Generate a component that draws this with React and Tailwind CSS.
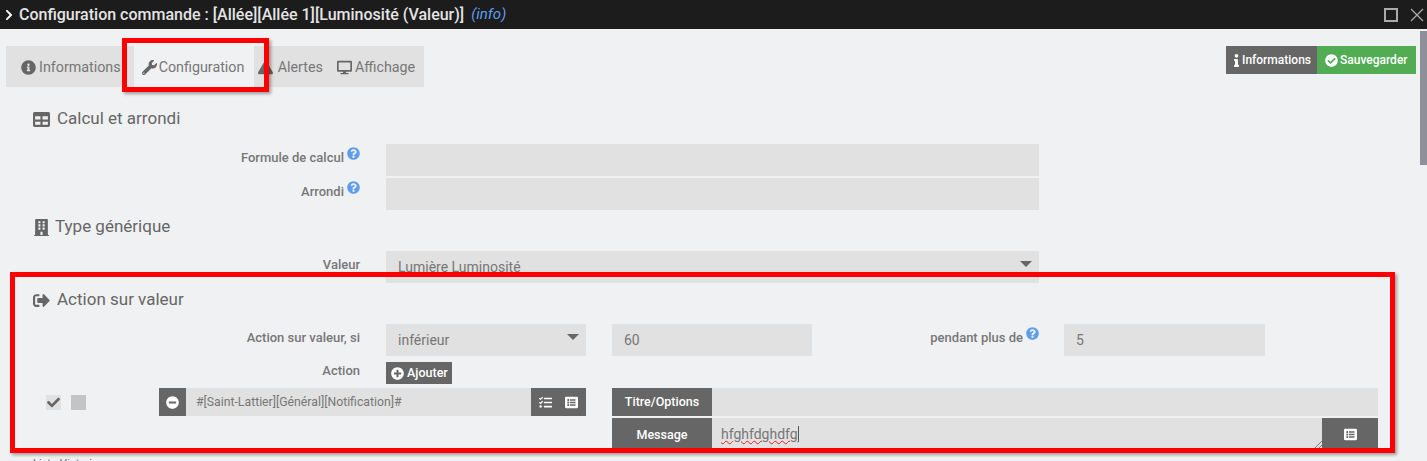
import {
  FaChevronRight, FaInfoCircle, FaWrench, FaExclamationTriangle, FaDesktop, FaTable, FaBuilding,
  FaSignOutAlt, FaCheckCircle, FaInfo, FaQuestionCircle, FaPlusCircle, FaMinusCircle, FaCheck,
  FaTasks, FaListAlt,
} from 'react-icons/fa';

function Help() {
  return <FaQuestionCircle className="text-[13px] text-[#5f9eea] mb-[10px] ml-[3px] shrink-0" />;
}

function SectionTitle({ icon: Icon, children, className = '', gap = 'gap-[7px]' }) {
  return (
    <div className={`flex items-center pl-[33px] pt-[2px] h-[22px] text-[17px] text-[#666] ${gap} ${className}`}>
      <Icon className="text-[17px]" />
      <span>{children}</span>
    </div>
  );
}

function Label({ children, help, className = 'w-[360px]' }) {
  return (
    <div className={`shrink-0 flex items-center justify-end pb-[4px] text-[13px] font-medium text-[#777] ${className}`}>
      {children}
      {help && <Help />}
    </div>
  );
}

function Field({ className = '', children }) {
  return (
    <div className={`h-[32px] bg-[#e0e1e0] text-[14px] text-[#777] flex items-center px-3 ${className}`}>
      {children}
    </div>
  );
}

function Caret() {
  return <span className="ml-auto -mr-[5px] self-start mt-[10px] w-0 h-0 border-x-[6px] border-x-transparent border-t-[6px] border-t-[#666]" />;
}

function Tab({ icon: Icon, children, className = '', gap = 'gap-[3px]' }) {
  return (
    <div className={`h-full flex items-center pt-[1px] ${gap} ${className}`}>
      <Icon className="text-[15px] text-[#666]" />
      <span className="text-[14.3px] text-[#777] pt-[1px]">{children}</span>
    </div>
  );
}

export default function App() {
  return (
    <div className="relative h-[461px] overflow-hidden bg-[#f0f1f3] font-['Roboto',sans-serif]">
      <div className="h-[29px] bg-[#1c1c1c] flex items-center text-[#e4e4e4]">
        <FaChevronRight className="text-[12px] ml-[3px] mr-[4px] text-white" />
        <span className="text-[16px] font-medium">Configuration commande : [Allée][Allée 1][Luminosité (Valeur)]</span>
        <span className="text-[15px] italic text-[#5f9eea] ml-[7px]">(info)</span>
        <div className="ml-auto mr-[3px] flex items-center gap-[12px]">
          <span className="w-[14px] h-[14px] border-2 border-[#aaa]" />
          <svg width="14" height="14" viewBox="0 0 14 14" stroke="#aaa" strokeWidth="1.3"><path d="M1 1 13 13M13 1 1 13" /></svg>
        </div>
      </div>

      <div className="flex items-start justify-between pl-[6px] pr-[11px] pt-[17px]">
        <div className="h-[41px] w-[418px] bg-[#e0e1e0] flex items-center pl-[15px]">
          <Tab icon={FaInfoCircle}>Informations</Tab>
          <Tab icon={FaWrench} gap="gap-[2px]" className="bg-[#f0f1f3] w-[120px] pl-[8px] ml-[13px] mr-[4px]">Configuration</Tab>
          <Tab icon={FaExclamationTriangle} gap="gap-[5px]">Alertes</Tab>
          <span className="w-[14px]" />
          <Tab icon={FaDesktop}>Affichage</Tab>
        </div>
        <div className="flex h-[28px] text-[12px] font-medium text-white">
          <div className="w-[91px] bg-[#666] flex items-center pl-[8px] gap-[3px]"><FaInfo className="text-[13px] w-[5px]" />Informations</div>
          <div className="w-[99px] bg-[#52ac54] flex items-center pl-[8px] gap-[2px]"><FaCheckCircle className="text-[13px]" />Sauvegarder</div>
        </div>
      </div>

      <SectionTitle icon={FaTable} className="mt-[20px]">Calcul et arrondi</SectionTitle>
      <div className="mt-[15px] flex flex-col gap-[2px]">
        <div className="flex">
          <Label help>Formule de calcul</Label>
          <Field className="ml-[26px] w-[653px]" />
        </div>
        <div className="flex">
          <Label help>Arrondi</Label>
          <Field className="ml-[26px] w-[653px]" />
        </div>
      </div>
      <SectionTitle icon={FaBuilding} gap="gap-[5px]" className="mt-[5px]">Type générique</SectionTitle>
      <div className="mt-[14px] flex">
        <Label>Valeur</Label>
        <Field className="ml-[26px] w-[653px]">Lumière Luminosité<Caret /></Field>
      </div>
      <SectionTitle icon={FaSignOutAlt} className="mt-[5px]">Action sur valeur</SectionTitle>
      <div className="mt-[14px] flex">
        <Label>Action sur valeur, si</Label>
        <Field className="ml-[26px] w-[200px]">inférieur<Caret /></Field>
        <Field className="ml-[26px] w-[200px]">60</Field>
        <Label help className="w-[227px]">pendant plus de</Label>
        <Field className="ml-[25px] w-[201px]">5</Field>
      </div>
      <div className="mt-[6px] h-[22px] flex">
        <Label>Action</Label>
        <div className="ml-[26px] h-[22px] w-[66px] bg-[#666] text-white text-[12.5px] font-medium flex items-center pl-[5px] gap-[3px]">
          <FaPlusCircle className="text-[13px]" />Ajouter
        </div>
      </div>
      <div className="mt-[4px] flex items-start">
        <div className="ml-[46px] w-[113px] h-[28px] flex items-center gap-[10px]">
          <span className="w-[15px] h-[15px] bg-[#e0e1e0] flex items-center justify-center"><FaCheck className="text-[13px] text-[#666]" /></span>
          <span className="w-[15px] h-[15px] bg-[#c4c4c4]" />
        </div>
        <div className="flex w-[427px] h-[28px]">
          <div className="w-[27px] bg-[#666] text-white flex items-center justify-center"><FaMinusCircle className="text-[13px]" /></div>
          <div className="flex-1 bg-[#e0e1e0] text-[12.25px] text-[#777] flex items-center pl-[10px] pt-[1px]">#[Saint-Lattier][Général][Notification]#</div>
          <div className="w-[55px] bg-[#666] text-white flex items-center justify-center gap-[13px]">
            <FaTasks className="text-[13px]" /><FaListAlt className="text-[13px]" />
          </div>
        </div>
        <div className="ml-[26px] w-[766px] flex flex-col gap-[2px]">
          <div className="flex h-[28px]">
            <div className="w-[100px] bg-[#666] text-white text-[12.5px] font-medium flex items-center justify-center pt-[1px]">Titre/Options</div>
            <div className="flex-1 bg-[#e0e1e0]" />
          </div>
          <div className="flex h-[32px]">
            <div className="w-[100px] bg-[#666] text-white text-[12.5px] font-medium flex items-center justify-center pt-[2px]">Message</div>
            <div className="relative flex-1 bg-[#e0e1e0] text-[14px] text-[#777] pl-[9px] pt-[6px]">
              <span className="underline decoration-wavy decoration-[#e02020] decoration-1 border-r border-[#555]">hfghfdghdfg</span>
              <svg className="absolute right-0 bottom-0" width="9" height="9" viewBox="0 0 9 9" stroke="#777" strokeWidth="1"><path d="M0 9 9 0M4 9 9 4" /></svg>
            </div>
            <div className="w-[56px] bg-[#666] text-white flex items-center justify-center"><FaListAlt className="text-[13px]" /></div>
          </div>
        </div>
      </div>
      <div className="mt-[6px] pl-[33px] text-[11px] text-[#666]">Liste Historique</div>

      {/* scrollbar and hand-drawn annotations sit over the page */}
      <div className="absolute right-0 top-[31px] w-[7px] h-[134px] bg-[#8f8f99]" />
      <div className="absolute left-[122px] top-[38px] w-[147px] h-[54px] border-[5px] border-[#ff0000] shadow-[2px_2px_3px_rgba(0,0,0,0.35)]" />
      <div className="absolute left-[10px] top-[272px] w-[1385px] h-[181px] border-[5px] border-[#ff0000] shadow-[2px_2px_3px_rgba(0,0,0,0.35)]" />
    </div>
  );
}
